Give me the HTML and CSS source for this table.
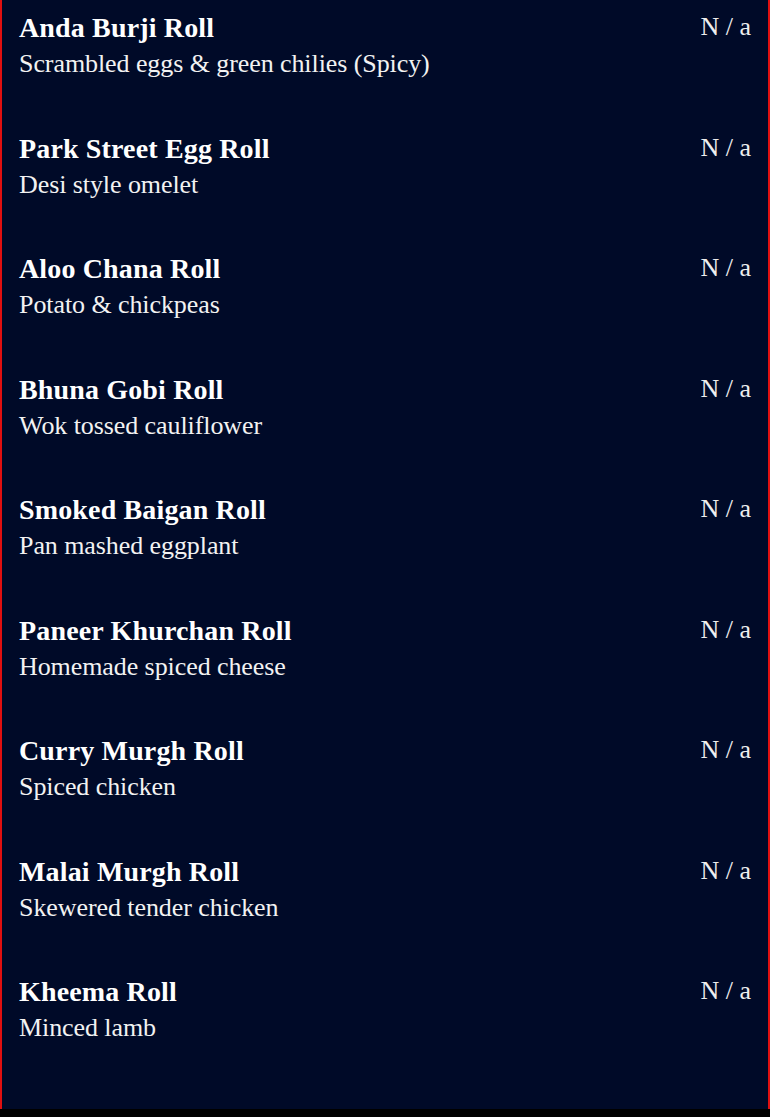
FILE: index.html
```html
<!DOCTYPE html>
<html lang="en">
<head>
<meta charset="utf-8">
<title>Rolls</title>
<link rel="stylesheet" href="styles.css">
</head>
<body>
<main class="menu">
  <div class="item"><div class="info"><h3 class="name">Anda Burji Roll</h3><p class="desc">Scrambled eggs &amp; green chilies (Spicy)</p></div><span class="price">N / a</span></div>
  <div class="item"><div class="info"><h3 class="name">Park Street Egg Roll</h3><p class="desc">Desi style omelet</p></div><span class="price">N / a</span></div>
  <div class="item"><div class="info"><h3 class="name">Aloo Chana Roll</h3><p class="desc">Potato &amp; chickpeas</p></div><span class="price">N / a</span></div>
  <div class="item"><div class="info"><h3 class="name">Bhuna Gobi Roll</h3><p class="desc">Wok tossed cauliflower</p></div><span class="price">N / a</span></div>
  <div class="item"><div class="info"><h3 class="name">Smoked Baigan Roll</h3><p class="desc">Pan mashed eggplant</p></div><span class="price">N / a</span></div>
  <div class="item"><div class="info"><h3 class="name">Paneer Khurchan Roll</h3><p class="desc">Homemade spiced cheese</p></div><span class="price">N / a</span></div>
  <div class="item"><div class="info"><h3 class="name">Curry Murgh Roll</h3><p class="desc">Spiced chicken</p></div><span class="price">N / a</span></div>
  <div class="item"><div class="info"><h3 class="name">Malai Murgh Roll</h3><p class="desc">Skewered tender chicken</p></div><span class="price">N / a</span></div>
  <div class="item"><div class="info"><h3 class="name">Kheema Roll</h3><p class="desc">Minced lamb</p></div><span class="price">N / a</span></div>
</main>
</body>
</html>
```
FILE: styles.css
```css
html, body {
  margin: 0;
  padding: 0;
  background: #000000;
}
body {
  font-family: "Liberation Serif", "Times New Roman", serif;
  color: #ffffff;
}
.menu {
  background: #000a28;
  border-left: 2px solid #e01010;
  border-right: 2px solid #e01010;
  padding: 0 17px 24.5px;
}
.item {
  display: flex;
  justify-content: space-between;
  align-items: flex-start;
  height: 120.5px;
  padding-top: 12px;
  box-sizing: border-box;
}
.name {
  margin: 0;
  font-size: 28px;
  line-height: 32px;
  font-weight: bold;
  letter-spacing: 0.15px;
  color: #ffffff;
}
.desc {
  margin: 5px 0 0;
  font-size: 26px;
  line-height: 30px;
  letter-spacing: -0.08px;
  color: #f2f2f2;
}
.price {
  font-size: 26px;
  line-height: 30px;
  color: #eeeeee;
}
```
